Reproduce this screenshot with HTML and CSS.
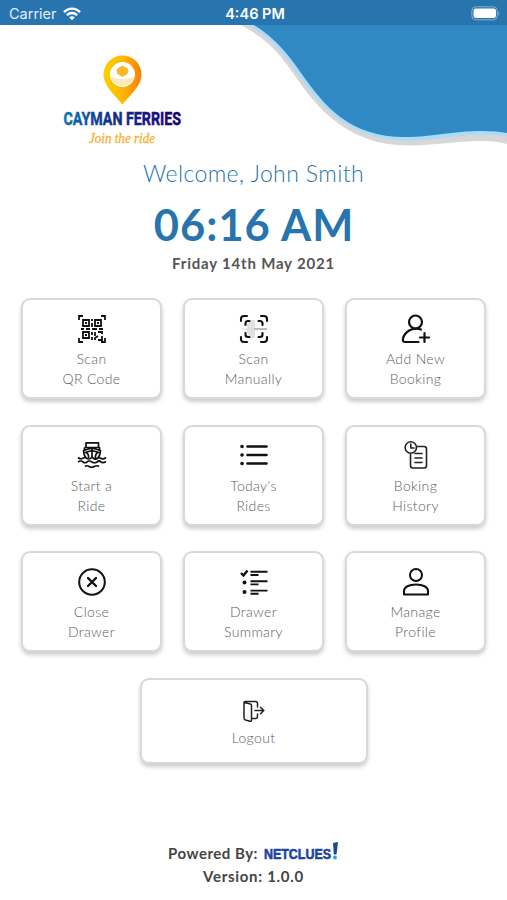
FILE: index.html
```html
<!DOCTYPE html>
<html lang="en">
<head>
<meta charset="utf-8">
<title>Cayman Ferries</title>
<link rel="stylesheet" href="styles.css">
</head>
<body>
<svg class="wave" viewBox="0 0 507 160" aria-hidden="true">
  <path fill="#d7d7d7" d="M241 25C266 38 280 54 293 73C318 111 350 145 407 145.500C437 145.500 452 141 483 141Q497 141 507 144V25Z"/>
  <path fill="#a9dcfa" d="M248 25C272 38 284 54 297 73C322 109 350 140 407 140.500C437 140.500 452 135 483 134.500Q497 134.500 507 136.500V25Z"/>
  <path fill="#3089c2" d="M254 25C275 38 288 54 301 73C325 107 350 137 405 137C435 137 450 131 483 131Q497 131 507 133V25Z"/>
</svg>
<header class="status">
  <div class="carrier">Carrier
    <svg width="18" height="14" viewBox="0 0 18 14" fill="none" stroke="#fff" stroke-width="2.300"><path d="M.9 5.100C5.500.5 12.500.5 17.100 5.100M3.900 8.100C6.800 5.300 11.200 5.300 14.100 8.100"/><path d="M9 13.300L6.100 10.400Q9 8 11.900 10.400Z" fill="#fff" stroke="none"/></svg>
  </div>
  <div class="clock">4:46 PM</div>
  <div class="battery"><svg width="30" height="15" viewBox="0 0 30 15"><rect x=".8" y=".8" width="25.500" height="13" rx="4" fill="none" stroke="#82b1d3"/><rect x="2.500" y="2.500" width="22.500" height="9.600" rx="2.300" fill="#fff"/><path d="M27.500 5Q29.500 7.300 27.500 9.600Z" fill="#82b1d3"/></svg></div>
</header>
<main>
  <svg class="logo" width="130" height="100" viewBox="0 0 130 100">
    <defs>
      <linearGradient id="pin"><stop stop-color="#fbd000"/><stop offset=".5" stop-color="#ffb800"/><stop offset="1" stop-color="#fa7d09"/></linearGradient>
      <linearGradient id="name"><stop stop-color="#0878b5"/><stop offset=".35" stop-color="#12358e"/><stop offset="1" stop-color="#17006f"/></linearGradient>
    </defs>
    <path fill="url(#pin)" d="M64.500 54.500C61 49 45.500 37 45.500 24.500A19 19 0 0 1 83.500 24.500C83.500 37 68 49 64.500 54.500Z"/>
    <circle cx="64.500" cy="24.500" r="12.500" fill="#fff"/>
    <path d="M52.500 27Q64.500 31 76.500 27A12.500 12.500 0 0 1 52.500 27Z" fill="#fbe8bd"/>
    <path d="M58.500 20.500L60 17.500H61.500L64.500 15.500L67.500 17.500H69L70.500 20.500L69.500 24L64.500 27L59.500 24Z" fill="#fcb62c"/>
    <text class="brand" x="5.500" y="74.500" textLength="117.500" lengthAdjust="spacingAndGlyphs" fill="url(#name)">CAYMAN FERRIES</text>
    <text class="tagline" x="31" y="92.500" textLength="66" lengthAdjust="spacingAndGlyphs">Join the ride</text>
  </svg>
  <h1 class="welcome">Welcome, John Smith</h1>
  <div class="time">06:16 AM</div>
  <div class="date">Friday 14th May 2021</div>
  <nav class="grid">
    <a class="card">
      <svg viewBox="0 0 30 30"><g fill="none" stroke="#111" stroke-width="1.800"><path d="M2 6V2H6M24 2H28V6M28 24V28H24M6 28H2V24"/><path d="M6 6H12V12H6ZM18 6H24V12H18ZM6 18H12V24H6Z"/><path d="M15 5V7M15 9V13M4 15H7M9 15H13M15 15H20M22 15H26M15 18V21M15 23V26M18 18V22M21 18H25V20M21 22L18 24V26M25 22V26H21"/></g><path d="M8 8H10V10H8ZM20 8H22V10H20ZM8 20H10V22H8Z" fill="#111"/></svg>
      <span>Scan<br>QR Code</span>
    </a>
    <a class="card">
      <svg viewBox="0 0 30 30"><path d="M11 6H16V24H11L8 19V11Z" fill="#e2e2e2"/><path d="M2 15H15" stroke="#ddd" stroke-width="1.200"/><path d="M15 15H28" stroke="#aaa" stroke-width="1.600"/><g fill="none" stroke="#111" stroke-width="2.100" stroke-linecap="round"><path d="M2 7V5Q2 2 5 2H8M22 2H25Q28 2 28 5V7M28 23V25Q28 28 25 28H22M8 28H5Q2 28 2 25V23"/><path d="M6.500 11V9.500Q6.500 7 9 7H10.500M19.500 7H21Q23.500 7 23.500 9.500V11M23.500 19V20.500Q23.500 23 21 23H19.500M10.500 23H9Q6.500 23 6.500 20.500V19"/></g></svg>
      <span>Scan<br>Manually</span>
    </a>
    <a class="card">
      <svg viewBox="0 0 30 30" fill="none" stroke="#111" stroke-width="2.200" stroke-linecap="round"><circle cx="14.500" cy="8" r="6.500"/><path d="M20 15.500C11 12.500 3.500 18 2 24.500Q1 28 4.500 28H17.500M23.500 19V28M19 23.500H28"/></svg>
      <span>Add New<br>Booking</span>
    </a>
    <a class="card">
      <svg viewBox="0 0 30 30" fill="none" stroke="#111" stroke-width="1.700" stroke-linejoin="round"><path d="M9 6.500V1.800H21.500V6.500M7.500 6.500H22.500V9M7.500 6.500V9M15 6.500V17M9 17C7.500 15 6.500 13 6.500 9.500L15 7L23.500 9.500C23.500 13 22.500 15 21 17M6.500 12L15 9.500L23.500 12M9 11.500Q12 13 11.500 17M21 11.500Q18 13 18.500 17"/><path d="M1 16.500Q4 19 7 16.700Q8 16 9 17Q12 19 14 17Q15 16 16 17Q18.500 19 21 17Q22 16 23 17Q26 19 29 16.500M1 21Q4 19 6 21Q8 22.500 10 21Q12 19 15 21Q17.500 22.500 20 21Q22 19 24 21Q26 22.500 29 20.500M8 25.500Q10 24 12 25.500Q15 27 17 25.500Q20 24 22 25.500"/></svg>
      <span>Start a<br>Ride</span>
    </a>
    <a class="card">
      <svg viewBox="0 0 30 30" fill="none" stroke="#111" stroke-width="2.600" stroke-linecap="round"><path d="M8.500 5.500H27.500M8.500 14H27.500M8.500 22.500H27.500"/><path stroke-width="3.600" d="M3 5.500H3.100M3 14H3.100M3 22.500H3.100"/></svg>
      <span>Today's<br>Rides</span>
    </a>
    <a class="card">
      <svg viewBox="0 0 30 30" fill="none" stroke="#222" stroke-width="1.600" stroke-linecap="round" stroke-linejoin="round"><circle cx="9.800" cy="6.500" r="5.700"/><path d="M9.800 3V7H13M16.500 5.500H23Q25.500 5.500 25.500 8V24.500Q25.500 27 23 27H12Q9.500 27 9.500 24.500V13.500M14 12.500H21M14 17H21M14 21.500H21"/></svg>
      <span>Boking<br>History</span>
    </a>
    <a class="card">
      <svg viewBox="0 0 30 30" fill="none" stroke="#111" stroke-width="2" stroke-linecap="round"><circle cx="15" cy="15" r="12.800"/><path stroke-width="2.400" d="M11 11L19 19M19 11L11 19"/></svg>
      <span>Close<br>Drawer</span>
    </a>
    <a class="card">
      <svg viewBox="0 0 30 30" fill="none" stroke="#111" stroke-width="1.900"><path stroke-width="2.400" d="M2 6L4.500 8.500L8.500 3.500"/><circle cx="5.500" cy="15.500" r="2" fill="#111" stroke="none"/><circle cx="5.500" cy="25" r="2" fill="#111" stroke="none"/><path d="M11.500 4.800H28.500M11.500 8H19.500M11.500 14.200H28.500M11.500 17.400H19.500M11.500 23.600H28.500M11.500 26.800H19.500"/></svg>
      <span>Drawer<br>Summary</span>
    </a>
    <a class="card">
      <svg viewBox="0 0 30 30" fill="none" stroke="#111" stroke-width="2" stroke-linejoin="round"><circle cx="15" cy="8" r="6"/><path d="M3 27.500V24C3 20 8 17.500 15 17.500S27 20 27 24V27.500Z"/></svg>
      <span>Manage<br>Profile</span>
    </a>
  </nav>
  <a class="card logout">
    <svg viewBox="0 0 24 24" fill="none" stroke="#222" stroke-width="1.500" stroke-linejoin="round" stroke-linecap="round"><path d="M2 3.500L8.500 5Q9.500 5.200 9.500 6.500V21Q9.500 22.700 8 22.200L3.500 21Q2 20.500 2 19V3.500Q2 2.500 3 2.500H13.500Q15.500 2.500 15.500 4.500V8M15.500 15V17.500Q15.500 19.500 13.500 19.500H10M13 11.500H21.500M18.500 8.300L21.800 11.500L18.500 14.700"/></svg>
    <span>Logout</span>
  </a>
</main>
<footer>
  <div class="powered">Powered By: <svg width="77" height="22" viewBox="0 0 77 22"><text class="netclues" x="2" y="17" textLength="67" lengthAdjust="spacingAndGlyphs">NETCLUES</text><path fill="#1c459b" d="M71 1L76 0L74.500 12.500H71.800Z"/><circle cx="73" cy="15.500" r="1.900" fill="#28a5de"/></svg></div>
  <div class="version">Version: 1.0.0</div>
</footer>
</body>
</html>
```
FILE: styles.css
```css
* { box-sizing: border-box; }
body {
  margin: 0;
  height: 900px;
  display: flex;
  flex-direction: column;
  background: #fff;
  font-family: Lato, sans-serif;
  overflow: hidden;
}
svg { display: block; flex: none; overflow: visible; }
.wave { position: absolute; top: 0; left: 0; width: 507px; height: 160px; z-index: -1; }
.status {
  height: 25px;
  padding: 2px 6px 0 9px;
  display: grid;
  grid-template-columns: 1fr auto 1fr;
  align-items: center;
  background: #2874ae;
  color: #fff;
  font: 14.500px/20px Inter, sans-serif;
}
.carrier { display: flex; align-items: center; gap: 6px; color: #e4eff7; }
.clock { font-weight: 600; }
.battery { justify-self: end; }
main { display: flex; flex-direction: column; align-items: center; }
.logo { align-self: flex-start; margin: 25px 0 0 58px; }
.brand { font: 700 18.500px Roboto, sans-serif; stroke: url(#name); stroke-width: .5px; }
.tagline { font: italic 400 14.500px "Liberation Serif", serif; fill: #f9ae31; stroke: #f9ae31; stroke-width: .3px; }
.welcome { margin: 9px 0 0; font-size: 23px; line-height: 28px; font-weight: 300; letter-spacing: .4px; color: #2874ae; }
.time { margin-top: 10px; font-size: 43.500px; line-height: 54px; font-weight: 700; letter-spacing: 1px; margin-right: -1px; color: #2874ae; }
.date { margin-top: 2px; font-size: 15px; line-height: 20px; font-weight: 700; letter-spacing: .8px; color: #555; }
.grid {
  margin-top: 25px;
  display: grid;
  grid-template-columns: repeat(3, 141.500px);
  grid-auto-rows: 101px;
  gap: 25.500px 20.500px;
}
.card {
  display: flex;
  flex-direction: column;
  align-items: center;
  padding-top: 14px;
  border: 2.500px solid #d9d9d9;
  border-radius: 9px;
  background: #fff;
  box-shadow: 0 3px 4px rgba(0, 0, 0, .2);
  color: #606060;
  font-size: 14px;
  line-height: 20px;
  font-weight: 300;
  letter-spacing: .35px;
  text-align: center;
}
.card svg { width: 30px; height: 30px; margin-bottom: 5px; }
.logout { width: 228px; height: 86px; margin-top: 26px; padding-top: 19px; }
.logout svg { width: 24px; height: 24px; margin-bottom: 5px; }
footer { margin-top: 78px; display: flex; flex-direction: column; align-items: center; color: #444; font-size: 15px; line-height: 22px; font-weight: 700; letter-spacing: .5px; }
.powered { display: flex; gap: 4px; align-items: center; }
.version { margin-top: 1px; letter-spacing: .7px; }
.netclues { font: 700 14.500px "Liberation Sans", sans-serif; fill: #1c459b; stroke: #1c459b; stroke-width: .6px; letter-spacing: 0; }
```
